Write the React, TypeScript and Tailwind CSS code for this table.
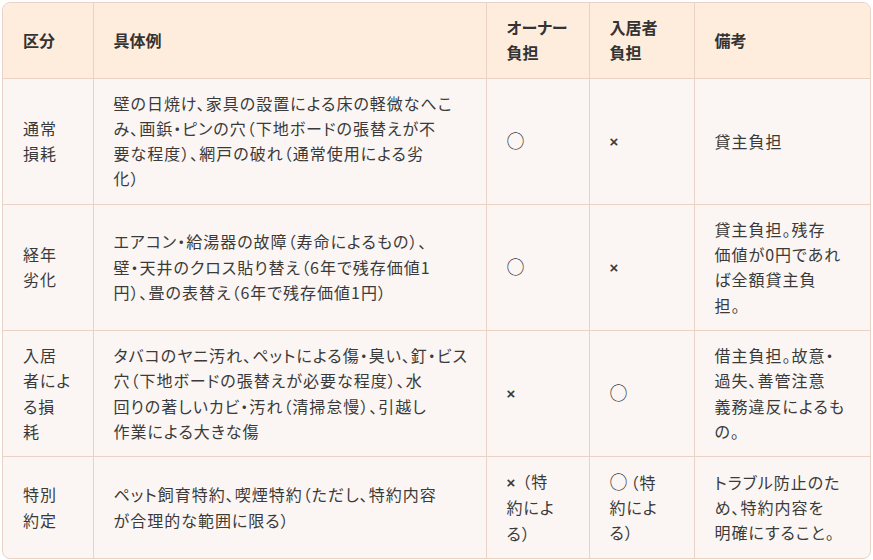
import React from "react";

type Row = {
  kind: string[];
  example: string[];
  owner: string[];
  tenant: string[];
  note: string[];
};

const ROWS: Row[] = [
  {
    kind: ["通常", "損耗"],
    example: [
      "壁の日焼け、家具の設置による床の軽微なへこ",
      "み、画鋲・ピンの穴（下地ボードの張替えが不",
      "要な程度）、網戸の破れ（通常使用による劣",
      "化）",
    ],
    owner: ["○"],
    tenant: ["×"],
    note: ["貸主負担"],
  },
  {
    kind: ["経年", "劣化"],
    example: [
      "エアコン・給湯器の故障（寿命によるもの）、",
      "壁・天井のクロス貼り替え（6年で残存価値1",
      "円）、畳の表替え（6年で残存価値1円）",
    ],
    owner: ["○"],
    tenant: ["×"],
    note: ["貸主負担。残存", "価値が0円であれ", "ば全額貸主負", "担。"],
  },
  {
    kind: ["入居", "者によ", "る損", "耗"],
    example: [
      "タバコのヤニ汚れ、ペットによる傷・臭い、釘・ビス",
      "穴（下地ボードの張替えが必要な程度）、水",
      "回りの著しいカビ・汚れ（清掃怠慢）、引越し",
      "作業による大きな傷",
    ],
    owner: ["×"],
    tenant: ["○"],
    note: ["借主負担。故意・", "過失、善管注意", "義務違反によるも", "の。"],
  },
  {
    kind: ["特別", "約定"],
    example: [
      "ペット飼育特約、喫煙特約（ただし、特約内容",
      "が合理的な範囲に限る）",
    ],
    owner: ["×（特", "約によ", "る）"],
    tenant: ["○（特", "約によ", "る）"],
    note: ["トラブル防止のた", "め、特約内容を", "明確にすること。"],
  },
];

// the marks are drawn a bit differently from the body text
function Mark({ text }: { text: string }) {
  if (text.startsWith("×"))
    return (
      <>
        <span className="mr-[6px] font-['Liberation_Sans'] text-[15px] font-bold">×</span>
        {text.slice(1)}
      </>
    );
  if (text.startsWith("○"))
    return (
      <>
        <span className="mr-[2px] text-[18px] leading-none">○</span>
        {text.slice(1)}
      </>
    );
  return <>{text}</>;
}

function Lines({ lines }: { lines: string[] }) {
  return (
    <>
      {lines.map((l, i) => (
        <span key={i} className="block whitespace-nowrap">
          <Mark text={l} />
        </span>
      ))}
    </>
  );
}

export default function App() {
  const th =
    "border-r border-b border-[#ead3c4] px-5 py-3 text-left align-middle font-bold text-[#333]";
  const td = "border-r border-[#ead3c4] px-5 py-3 align-middle tracking-[1px]";

  return (
    <div
      className="h-[560px] w-[873px] bg-white p-[2px]"
      style={{ fontFamily: '"Noto Sans CJK JP", "Noto Sans", sans-serif' }}
    >
      <div className="overflow-hidden rounded-lg border border-[#ead3c4] bg-[#fbf6f3]">
        <table className="w-full table-fixed border-collapse text-[16px] leading-[25.3px] text-[#3a3a3a] [font-feature-settings:'palt']">
          <colgroup>
            <col className="w-[90px]" />
            <col className="w-[393px]" />
            <col className="w-[103px]" />
            <col className="w-[105px]" />
            <col />
          </colgroup>
          <thead className="bg-[#feecdd]">
            <tr>
              <th className={th}>区分</th>
              <th className={th}>具体例</th>
              <th className={th}>
                <Lines lines={["オーナー", "負担"]} />
              </th>
              <th className={th}>
                <Lines lines={["入居者", "負担"]} />
              </th>
              <th className={th + " border-r-0"}>備考</th>
            </tr>
          </thead>
          <tbody>
            {ROWS.map((r, i) => {
              const last = i === ROWS.length - 1;
              const rowCls = last ? "" : " border-b";
              return (
                <tr key={i}>
                  <td className={td + rowCls}>
                    <Lines lines={r.kind} />
                  </td>
                  <td className={td + rowCls}>
                    <Lines lines={r.example} />
                  </td>
                  <td className={td + rowCls}>
                    <Lines lines={r.owner} />
                  </td>
                  <td className={td + rowCls}>
                    <Lines lines={r.tenant} />
                  </td>
                  <td className={td + rowCls + " border-r-0"}>
                    <Lines lines={r.note} />
                  </td>
                </tr>
              );
            })}
          </tbody>
        </table>
      </div>
    </div>
  );
}
